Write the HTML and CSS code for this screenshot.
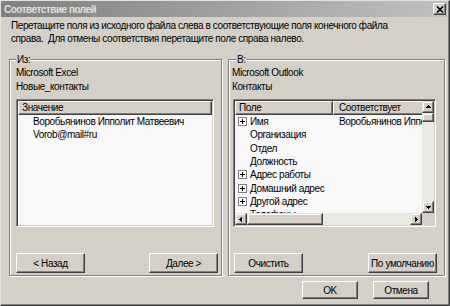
FILE: index.html
```html
<!DOCTYPE html>
<html>
    <head>
        <title>Соответствие полей</title>
        <meta charset="UTF-8">
        <link rel="stylesheet" href="styles.css">
    </head>
    <body>
        <div class="window">
            <div class="titleBar">
                <span class="title">Соответствие полей</span>
                <span class="closeBtn"><svg width="8" height="7" viewBox="0 0 8 7"><path d="M1 0.5L7 6.5M7 0.5L1 6.5" stroke="#000" stroke-width="1.6"/></svg></span>
            </div>
            <p class="intro">Перетащите поля из исходного файла слева в соответствующие поля конечного файла<br>справа.&nbsp; Для отмены соответствия перетащите поле справа налево.</p>

            <div class="panels">
                <fieldset class="group groupFrom">
                    <legend>Из:</legend>
                    <div class="source">Microsoft Excel</div>
                    <div class="source">Новые_контакты</div>
                    <div class="listView listFrom">
                        <div class="lvHeader"><span class="hdCell hdFull">Значение</span></div>
                        <div class="lvRow rowPlain">Воробьянинов Ипполит Матвеевич</div>
                        <div class="lvRow rowPlain">Vorob@mail#ru</div>
                    </div>
                    <div class="groupButtons">
                        <button class="btn btnGroup">&lt; Назад</button>
                        <button class="btn btnGroup">Далее &gt;</button>
                    </div>
                </fieldset>

                <fieldset class="group groupTo">
                    <legend>В:</legend>
                    <div class="source">Microsoft Outlook</div>
                    <div class="source">Контакты</div>
                    <div class="listView listTo">
                        <div class="lvBody">
                            <div class="lvHeader">
                                <span class="hdCell colField">Поле</span>
                                <span class="hdCell colMatch">Соответствует</span>
                            </div>
                            <div class="lvRow"><span class="colField"><svg class="exp" width="9" height="9" viewBox="0 0 9 9"><rect x="0.5" y="0.5" width="8" height="8" fill="#fff" stroke="#808080"/><path d="M2 4.5h5M4.5 2v5" stroke="#000"/></svg>Имя</span><span class="colMatch">Воробьянинов Ипполит Матвеевич</span></div>
                            <div class="lvRow"><span class="colField"><span class="expBlank"></span>Организация</span></div>
                            <div class="lvRow"><span class="colField"><span class="expBlank"></span>Отдел</span></div>
                            <div class="lvRow"><span class="colField"><span class="expBlank"></span>Должность</span></div>
                            <div class="lvRow"><span class="colField"><svg class="exp" width="9" height="9" viewBox="0 0 9 9"><rect x="0.5" y="0.5" width="8" height="8" fill="#fff" stroke="#808080"/><path d="M2 4.5h5M4.5 2v5" stroke="#000"/></svg>Адрес работы</span></div>
                            <div class="lvRow"><span class="colField"><svg class="exp" width="9" height="9" viewBox="0 0 9 9"><rect x="0.5" y="0.5" width="8" height="8" fill="#fff" stroke="#808080"/><path d="M2 4.5h5M4.5 2v5" stroke="#000"/></svg>Домашний адрес</span></div>
                            <div class="lvRow"><span class="colField"><svg class="exp" width="9" height="9" viewBox="0 0 9 9"><rect x="0.5" y="0.5" width="8" height="8" fill="#fff" stroke="#808080"/><path d="M2 4.5h5M4.5 2v5" stroke="#000"/></svg>Другой адрес</span></div>
                            <div class="lvRow"><span class="colField"><span class="expBlank"></span>Телефоны</span></div>
                        </div>
                        <div class="vScroll">
                            <span class="sbBtn"><svg width="10" height="10" viewBox="0 0 10 10" shape-rendering="crispEdges"><path d="M5 3h1v1h1v1h1v1H3V5h1V4h1z"/></svg></span>
                            <span class="sbThumb vThumb"></span>
                            <span class="sbTrack"></span>
                            <span class="sbBtn"><svg width="10" height="10" viewBox="0 0 10 10" shape-rendering="crispEdges"><path d="M3 4h5v1H7v1H6v1H5V6H4V5H3z"/></svg></span>
                        </div>
                        <div class="hScroll">
                            <span class="sbBtn"><svg width="10" height="10" viewBox="0 0 10 10" shape-rendering="crispEdges"><path d="M3 5h1V4h1V3h1v5H5V7H4V6H3z"/></svg></span>
                            <span class="sbThumb hThumb"></span>
                            <span class="sbTrack"></span>
                            <span class="sbBtn"><svg width="10" height="10" viewBox="0 0 10 10" shape-rendering="crispEdges"><path d="M4 3h1v1h1v1h1v1H6v1H5v1H4z"/></svg></span>
                        </div>
                        <div class="sbCorner"></div>
                    </div>
                    <div class="groupButtons">
                        <button class="btn btnGroup">Очистить</button>
                        <button class="btn btnGroup">По умолчанию</button>
                    </div>
                </fieldset>
            </div>

            <div class="dialogButtons">
                <button class="btn btnDialog">OK</button>
                <button class="btn btnDialog">Отмена</button>
            </div>
        </div>
    </body>
</html>
```

FILE: styles.css
```css
body{
    margin: 0;
    background-color: #d4d0c8;
    font-family: "Liberation Sans", Arial, sans-serif;
    font-size: 10px;
    letter-spacing: -0.4px;
    color: #000;
}

.window{
    box-sizing: border-box;
    width: 450px;
    height: 306px;
    display: flex;
    flex-direction: column;
    background-color: #d4d0c8;
    border: 1px solid;
    border-color: #e4e2dc #404040 #404040 #e4e2dc;
    box-shadow: inset -1px -1px #808080;
}

/* caption */
.titleBar{
    height: 16px;
    margin-right: 2px;
    padding: 0 1px 0 3px;
    display: flex;
    align-items: center;
    justify-content: space-between;
    background: linear-gradient(to right, #808080, #c0c0c0);
}
.title{
    color: #e2e0da;
    font-weight: bold;
    letter-spacing: -0.5px;
}
.closeBtn{
    box-sizing: border-box;
    width: 13px;
    height: 12px;
    display: flex;
    align-items: center;
    justify-content: center;
    background-color: #d4d0c8;
    border: 1px solid;
    border-color: #fff #404040 #404040 #fff;
    box-shadow: inset -1px -1px #808080;
}

.intro{
    margin: 2px 0 0;
    padding: 0 10px;
    line-height: 13px;
}

/* group boxes */
.panels{
    display: flex;
    gap: 6px;
    margin-top: 8px;
    padding-left: 8px;
}
.group{
    box-sizing: border-box;
    margin: 0;
    min-width: 0;
    border: 1px solid #808080;
    box-shadow: inset 1px 1px #fff, 1px 1px #fff;
}
.group legend{
    padding: 0 1px;
    line-height: 13px;
    background-color: #d4d0c8;
}
.groupFrom{
    width: 213px;
    padding: 0 3px 2px 6px;
}
.groupTo{
    width: 217px;
    padding: 0 7px 2px 4px;
}
.groupTo legend{
    margin-left: 3px;
}
.groupTo .source{
    margin-left: -1px;
}

.source{
    line-height: 14px;
}

/* list views */
.listView{
    box-sizing: border-box;
    height: 128px;
    margin-top: 5px;
    background-color: #f8f8f8;
    border: 1px solid;
    border-color: #808080 #fff #fff #808080;
    box-shadow: inset 1px 1px #404040, inset -1px -1px #d4d0c8;
    padding: 1px;
    overflow: hidden;
    white-space: nowrap;
}
.listFrom{
    width: 198px;
}
.listTo{
    width: 203px;
    display: grid;
    grid-template-columns: 1fr 12px;
    grid-template-rows: 1fr 12px;
}
.lvBody{
    overflow: hidden;
}

.lvHeader{
    display: flex;
    height: 14px;
}
.hdCell{
    box-sizing: border-box;
    height: 14px;
    line-height: 12px;
    padding-left: 3px;
    background-color: #d4d0c8;
    border: 1px solid;
    border-color: #fff #404040 #404040 #fff;
    box-shadow: inset -1px -1px #808080;
}
.hdFull{
    flex: 1;
}
.colField{
    box-sizing: border-box;
    flex: none;
    width: 98px;
    display: flex;
    align-items: center;
}
.colMatch{
    box-sizing: border-box;
    flex: none;
    width: 120px;
    padding-left: 5px;
}
.lvRow .colMatch{
    padding-left: 6px;
}
.hdCell.colField{
    display: block;
}

.lvRow{
    display: flex;
    height: 13.33px;
    line-height: 13.33px;
}
.rowPlain{
    padding-left: 15px;
}
.exp, .expBlank{
    flex: none;
    width: 9px;
    height: 9px;
    margin: 0 3px 0 3px;
}

/* scrollbars */
.vScroll, .hScroll{
    display: flex;
}
.vScroll{
    flex-direction: column;
}
.sbBtn, .sbThumb{
    box-sizing: border-box;
    background-color: #d4d0c8;
    border: 1px solid;
    border-color: #e4e2dc #404040 #404040 #e4e2dc;
    box-shadow: inset -1px -1px #808080, inset 1px 1px #fff;
}
.sbBtn{
    flex: none;
    width: 12px;
    height: 12px;
    display: flex;
}
.vThumb{
    flex: none;
    height: 9px;
}
.hThumb{
    flex: none;
    width: 76px;
}
.sbTrack{
    flex: 1;
    background-color: #ebe9e4;
}
.sbCorner{
    background-color: #d4d0c8;
}

/* buttons */
.btn{
    box-sizing: border-box;
    padding: 0;
    font-family: "Liberation Sans", Arial, sans-serif;
    font-size: 10px;
    letter-spacing: -0.4px;
    white-space: nowrap;
    color: #000;
    background-color: #d4d0c8;
    border: 1px solid;
    border-color: #fff #404040 #404040 #fff;
    box-shadow: inset -1px -1px #808080;
}
.groupButtons{
    display: flex;
    justify-content: space-between;
    margin-top: 26px;
}
.groupTo .groupButtons{
    padding-left: 1px;
}
.btnGroup{
    width: 69px;
    height: 20px;
}
.dialogButtons{
    display: flex;
    justify-content: flex-end;
    gap: 15px;
    margin-top: 5px;
    padding-right: 20px;
}
.btnDialog{
    width: 56px;
    height: 18px;
}
```
